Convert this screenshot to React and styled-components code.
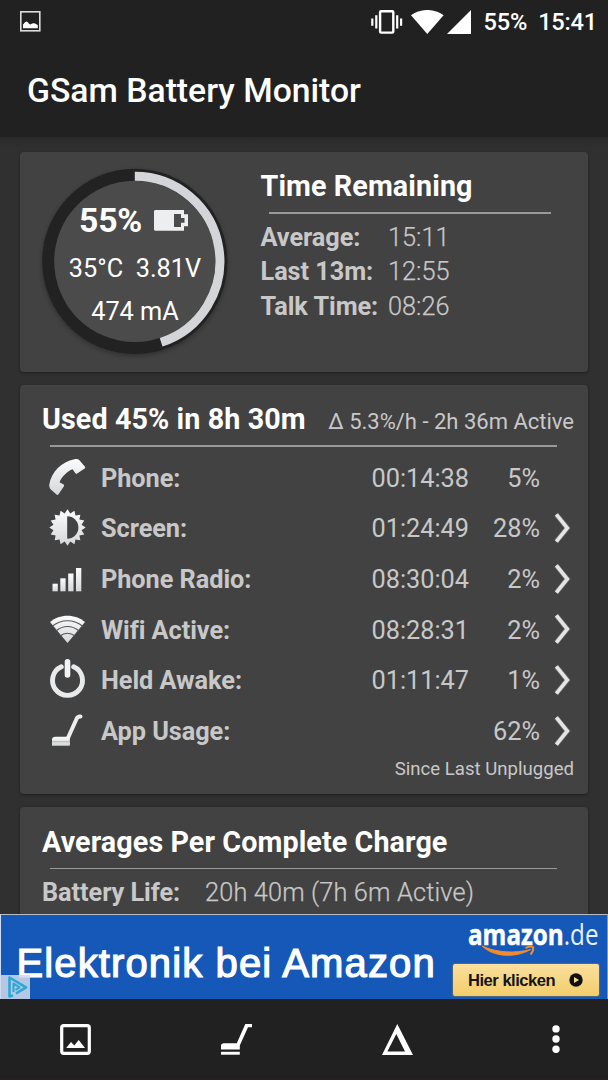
import React from "react";
import styled, { createGlobalStyle } from "styled-components";

const GlobalStyle = createGlobalStyle`
  * { box-sizing: border-box; }
  body { margin: 0; background: #303030; font-family: Roboto, sans-serif; overflow: hidden; }
  svg { display: block; flex: none; }
`;

const Screen = styled.div`
  width: 608px;
  height: 1080px;
  display: flex;
  flex-direction: column;
  background: #303030;
  color: #c8c8c8;
  overflow: hidden;
`;

const Header = styled.header`
  flex: none;
  height: 137px;
  background: #212121;
  color: #fff;
`;

const StatusBar = styled.div`
  height: 42px;
  padding: 1px 11px 0 20px;
  display: flex;
  align-items: center;
  font-size: 23.6px;
  font-weight: 500;
`;

const StatusSpacer = styled.div`
  flex: 1;
`;

const StatusText = styled.span`
  line-height: 43px;
  padding-top: 2px;
  margin-left: ${(p) => p.$gap}px;
  letter-spacing: -0.2px;
  white-space: nowrap;
`;

const AppTitle = styled.h1`
  margin: 0;
  padding-left: 27px;
  font-size: 33.7px;
  line-height: 98px;
  font-weight: 500;
  white-space: nowrap;
`;

const Content = styled.main`
  flex: 1;
  min-height: 0;
  overflow: hidden;
  padding: 15px 20px 0;
  display: flex;
  flex-direction: column;
  gap: 13.5px;
  background: linear-gradient(#292929, #2e2e2e 7px, #303030 14px);
`;

const Card = styled.section`
  flex: none;
  height: ${(p) => p.$height}px;
  border-radius: 4px;
  background: #424242;
  box-shadow: 0 1px 3px rgba(0, 0, 0, 0.4);
`;

const SummaryCard = styled(Card)`
  display: flex;
  padding: 12px 0 0 17px;
`;

const Gauge = styled.div`
  width: 196px;
  height: 196px;
  display: grid;
  > * { grid-area: 1 / 1; }
`;

const GaugeText = styled.div`
  color: #fff;
  display: flex;
  flex-direction: column;
  align-items: center;
  padding-top: 33px;
  z-index: 1;
`;

const Level = styled.div`
  display: flex;
  align-items: center;
  gap: 12px;
  height: 46px;
  margin-right: 3px;
  font-size: 33.8px;
  font-weight: 700;
  letter-spacing: -0.3px;
`;

const Reading = styled.div`
  height: 43px;
  line-height: 43px;
  margin-top: ${(p) => p.$top || 0}px;
  font-size: 25.3px;
  white-space: pre;
`;

const Remaining = styled.div`
  margin-left: 27.5px;
  padding-top: 2px;
`;

const Heading = styled.h2`
  margin: 0;
  color: #fff;
  font-size: 28.7px;
  letter-spacing: 0.1px;
  line-height: 40px;
  font-weight: 700;
  white-space: nowrap;
`;

const Divider = styled.hr`
  border: 0;
  height: 1.5px;
  width: ${(p) => p.$width}px;
  margin: 6px 0 0 8px;
  background: #999;
`;

const Estimates = styled.dl`
  margin: 7.5px 0 0;
  display: grid;
  grid-template-columns: 127.5px auto;
  grid-auto-rows: 34.3px;
  font-size: 25.3px;
  line-height: 34px;
`;

const Term = styled.dt`
  font-weight: 700;
  letter-spacing: -0.06px;
  white-space: nowrap;
`;

const Value = styled.dd`
  margin: 0;
  font-weight: 300;
  letter-spacing: ${(p) => p.$spacing || 0}px;
  -webkit-text-stroke: 0.25px #c8c8c8;
  white-space: nowrap;
`;

const UsageCard = styled(Card)`
  padding: 14px 14px 0 22px;
`;

const UsageHead = styled.div`
  display: flex;
  justify-content: space-between;
  align-items: baseline;
`;

const Rate = styled.span`
  font-size: 22px;
  white-space: nowrap;
`;

const UsageList = styled.ul`
  list-style: none;
  margin: 7px 0 0;
  padding: 0;
`;

const UsageRow = styled.li`
  height: 50.65px;
  display: grid;
  grid-template-columns: 59px 1fr 96.5px 72px 34px;
  align-items: center;
  font-size: 25.3px;
  line-height: 50px;
`;

const IconCell = styled.span`
  padding: 0 0 3px 5px;
`;

const Label = styled.span`
  font-weight: 700;
  letter-spacing: -0.05px;
  white-space: nowrap;
`;

const Figure = styled.span`
  text-align: ${(p) => p.$align || "left"};
`;

const ChevronCell = styled.span`
  justify-self: end;
  padding-bottom: 3px;
`;

const Footnote = styled.div`
  text-align: right;
  font-size: 18.6px;
  line-height: 24px;
  margin-top: -0.5px;
`;

const AveragesCard = styled(Card)`
  padding: 14.5px 14px 0 22px;
`;

const AverageLine = styled.dl`
  margin: 7px 0 0;
  display: grid;
  grid-template-columns: 163px auto;
  font-size: 25.3px;
  line-height: 34px;
`;

const AdBanner = styled.aside`
  flex: none;
  height: 85px;
  display: flex;
  background: #1658b8;
  border-top: 1.5px solid #b4bdc9;
  border-left: 1px solid #cfdcf0;
  border-right: 1px solid #6f9ad6;
  color: #fff;
  position: relative;
`;

const AdSlogan = styled.div`
  width: 452px;
  padding: 24px 0 0 15.5px;
  font-family: "Liberation Sans", sans-serif;
  font-size: 40px;
  line-height: 48px;
  letter-spacing: 1.12px;
  -webkit-text-stroke: 1.2px #fff;
  white-space: nowrap;
`;

const AdSide = styled.div`
  display: flex;
  flex-direction: column;
`;

const AdButton = styled.div`
  width: 146px;
  height: 32px;
  margin-top: 1px;
  padding: 0 16px 0 15px;
  display: flex;
  align-items: center;
  justify-content: space-between;
  border-radius: 2px;
  background: linear-gradient(#fadf9d, #f3cd6c);
  box-shadow: 0 0 1px 1px rgba(120, 120, 90, 0.6);
  color: #151515;
  font: 700 16.6px "Liberation Sans", sans-serif;
  letter-spacing: -0.5px;
  white-space: nowrap;
`;

const AdButtonLabel = styled.span`
  padding-top: 2px;
`;

const AdChoices = styled.div`
  position: absolute;
  left: 0;
  bottom: 0;
  width: 29px;
  height: 24px;
  padding-left: 6px;
  background: rgba(207, 218, 236, 0.86);
`;

const Toolbar = styled.nav`
  flex: none;
  height: 81px;
  background: #212121;
  border-bottom: 1px solid #2a2024;
  display: grid;
  grid-template-columns: 151px 170px 153px 1fr;
  align-items: center;
  justify-items: center;
  > :last-child { margin-left: 30px; }
`;

const StatusPicture = () => (
  <svg width="21" height="21" viewBox="0 0 21 21">
    <rect x="0.8" y="0.8" width="19" height="19" fill="none" stroke="#ddd" strokeWidth="1.6" />
    <path d="M3 17.3V13.5C4 13 4.300 11 6.300 10.400C8 10.600 8.700 12.500 9.800 13.300C11 13.800 12 11.700 14 12.300C15.500 12.500 16.300 13.600 17.800 14V17.300Z" fill="#fff" />
  </svg>
);

const Vibrate = () => (
  <svg width="32" height="24" viewBox="0 0 32 24" fill="none" stroke="#fff">
    <rect x="9.100" y="1.200" width="13.200" height="21.400" rx="1" strokeWidth="2.400" />
    <path d="M5.300 5.200V18.500M26.200 5.200V18.500M1.300 8.500V15.800M30.100 8.500V15.800" strokeWidth="2.200" />
  </svg>
);

const StatusWifi = () => (
  <svg width="33" height="24" viewBox="0 0 33 24">
    <path d="M0 5.300C9.800-1.800 22.800-1.800 32.600 5.300L16.300 24Z" fill="#fff" />
  </svg>
);

const StatusSignal = () => (
  <svg width="24" height="24" viewBox="0 0 24 24">
    <path d="M0 24L24 0V24Z" fill="#fff" />
  </svg>
);

const GaugeRing = () => (
  <svg width="196" height="196" viewBox="0 0 196 196">
    <defs>
      <filter id="ringShadow" x="-10%" y="-10%" width="120%" height="120%">
        <feDropShadow dx="0" dy="2" stdDeviation="2.500" floodColor="#000" floodOpacity="0.3" />
      </filter>
    </defs>
    <circle cx="97.800" cy="97.400" r="92.600" fill="#212121" filter="url(#ringShadow)" />
    <circle cx="97.800" cy="97.400" r="80.600" fill="#4b4b4b" />
    <path d="M97.800 12.300A85.100 85.100 0 0 1 124.100 178.330" fill="none" stroke="#d3d5d9" strokeWidth="9" />
  </svg>
);

const BatteryIcon = () => (
  <svg width="34" height="21" viewBox="0 0 34 21">
    <path fillRule="evenodd" d="M1 0H30V4.300H34V16.300H30V20.700H1L0 19.700V1Z M20 4V17H27V12.800H30.500V8H27V4Z" fill="#eceef0" />
  </svg>
);

const usageGradient = (id) => (
  <defs>
    <linearGradient id={id} x1="0" y1="0" x2="0" y2="1">
      <stop offset="0" stopColor="#fbfcfd" />
      <stop offset="1" stopColor="#d5d7d9" />
    </linearGradient>
  </defs>
);

const UsageIcon = ({ id, children }) => (
  <svg width="41" height="41" viewBox="0 0 41 41">
    {usageGradient(id)}
    {children}
  </svg>
);

const PhoneIcon = () => (
  <UsageIcon id="gPhone">
    <path fill="url(#gPhone)" d="M27.500 2.200C29 1.700 31 1.800 32 2.700L38 9.700C38.400 10.400 38.200 11 37.600 11.500L30.200 16.500C29.300 17 28.700 16.700 28.200 16L25.600 12.200C20.500 14 14.500 20 12.500 25.300L16.300 27.300C17.200 27.800 17.300 28.500 16.800 29.400L11.500 37.200C10.900 38 10.300 38.100 9.500 37.500L3.600 32.200C2.600 31 2.100 29.500 2.300 27.500C4.600 14.500 14.500 4.800 27.500 2.200Z" />
  </UsageIcon>
);

const sunPoints = Array.from({ length: 32 }, (_, i) => {
  const r = i % 2 ? 14.3 : 18.2;
  const a = (i * Math.PI) / 16;
  return `${(20.5 + r * Math.sin(a)).toFixed(2)},${(20.5 - r * Math.cos(a)).toFixed(2)}`;
}).join(" ");

const ScreenIcon = () => (
  <UsageIcon id="gScreen">
    <polygon points={sunPoints} fill="url(#gScreen)" />
    <path d="M20.200 9.300A11.200 11.200 0 0 1 20.200 31.700Z" fill="#424242" />
  </UsageIcon>
);

const RadioIcon = () => (
  <UsageIcon id="gRadio">
    <g fill="url(#gRadio)">
      <rect x="5.500" y="25.700" width="5.300" height="7.600" />
      <rect x="13.300" y="20.300" width="5.300" height="13" />
      <rect x="21.200" y="15.500" width="5.300" height="17.800" />
      <rect x="29" y="10" width="5.300" height="23.300" />
    </g>
  </UsageIcon>
);

const WifiIcon = () => (
  <UsageIcon id="gWifi">
    <path d="M3 13C12.500 4.500 28.500 4.500 38 13L20.500 34Z" fill="url(#gWifi)" />
    <path d="M5 17.500C14 9.800 27 9.800 36 17.500M9 22C16 16 25 16 32 22M13 27C17.500 23.300 23.500 23.300 28 27" fill="none" stroke="#585858" strokeWidth="1.100" />
  </UsageIcon>
);

const PowerIcon = () => (
  <UsageIcon id="gPower">
    <path d="M14.300 7.700A15 15 0 1 0 26.700 7.700" fill="none" stroke="#e8eaeb" strokeWidth="4.900" strokeLinecap="round" />
    <path d="M20.500 2.800V16" stroke="#f2f3f4" strokeWidth="5.600" strokeLinecap="round" />
  </UsageIcon>
);

const VacuumIcon = () => (
  <UsageIcon id="gVac">
    <path d="M20.500 29L29.500 9Q30.700 6.300 33.500 6.600" fill="none" stroke="#eceded" strokeWidth="4" strokeLinecap="round" />
    <path d="M5 34.200V29.500Q5 26.700 8.500 26.700H22.800V34.200Z" fill="url(#gVac)" />
    <path d="M5 31.900H22.800" stroke="#aaa" strokeWidth="1" />
    <rect x="5" y="32.400" width="17.800" height="3.300" fill="#dcdddd" />
  </UsageIcon>
);

const Chevron = () => (
  <svg width="20" height="34" viewBox="0 0 20 34" fill="none">
    <path d="M2.300 3.500L13.300 17L2.300 30.500" stroke="#e4e4e4" strokeOpacity="0.3" strokeWidth="5" />
    <path d="M2.300 3.300L13.300 17L2.300 30.700" stroke="#e4e4e4" strokeWidth="3.600" />
  </svg>
);

const LogoDrawing = styled.svg`
  overflow: visible;
  font-family: "Open Sans", sans-serif;
  font-size: 29px;
`;

const AmazonLogo = () => (
  <LogoDrawing width="147" height="48" viewBox="0 0 147 48">
    <text x="15" y="29.500" fill="#fff" textLength="130.500" lengthAdjust="spacingAndGlyphs">
      <tspan fontWeight="700" stroke="#fff" strokeWidth="0.500">amazon</tspan>
      <tspan fill="#e7f0ff">.de</tspan>
    </text>
    <path d="M29 31C41 42.500 63 43 77.500 34.500C63 38.500 44 38 29 31Z" fill="#f08c2b" stroke="#f08c2b" strokeWidth="1" />
    <path d="M72.500 33C76 31.300 79 31.300 80.300 32.200C80.300 35 79 38 77.500 39.500" fill="none" stroke="#f08c2b" strokeWidth="2" />
  </LogoDrawing>
);

const PlayDot = () => (
  <svg width="14" height="14" viewBox="0 0 14 14">
    <circle cx="7" cy="7" r="6.700" fill="#111" />
    <path d="M5 4L10 7L5 10Z" fill="#f6d98f" />
  </svg>
);

const AdChoicesIcon = () => (
  <svg width="21" height="24" viewBox="0 0 21 24" fill="none" stroke="#2aa9d4" strokeLinejoin="round">
    <path d="M6 20.500L2.500 21.500V2.500L19 12.300L9 18.500" strokeWidth="2.600" />
    <path d="M6.500 17V8.500L12.500 12.300L8.500 15" strokeWidth="2" />
  </svg>
);

const GalleryIcon = () => (
  <svg width="31" height="31" viewBox="0 0 31 31">
    <rect x="1.700" y="1.700" width="27.600" height="27.600" rx="2" fill="none" stroke="#fff" strokeWidth="3.200" />
    <path d="M6.200 24L11 18L14.300 21.500L18.700 16L25 24Z" fill="#fff" />
  </svg>
);

const VacuumTool = () => (
  <svg width="31" height="31" viewBox="0 0 31 31" fill="#fff">
    <path d="M0 25.500V22Q0 19.300 3 19.300H15.800L24.300 0H31V3.300H27L18.800 21.500V25.500Z" />
    <rect x="0" y="27.800" width="18.800" height="2.900" />
  </svg>
);

const DeltaIcon = () => (
  <svg width="31" height="31" viewBox="0 0 31 31">
    <path fillRule="evenodd" d="M15.300 0L31 31H0ZM14.300 10L5.400 27.500H23Z" fill="#fff" />
  </svg>
);

const MoreIcon = () => (
  <svg width="8" height="30" viewBox="0 0 8 30" fill="#fff">
    <circle cx="4" cy="4.900" r="3.700" />
    <circle cx="4" cy="15" r="3.700" />
    <circle cx="4" cy="25.200" r="3.700" />
  </svg>
);

const usage = [
  { label: "Phone:", time: "00:14:38", share: "5%", Icon: PhoneIcon },
  { label: "Screen:", time: "01:24:49", share: "28%", Icon: ScreenIcon, more: true },
  { label: "Phone Radio:", time: "08:30:04", share: "2%", Icon: RadioIcon, more: true },
  { label: "Wifi Active:", time: "08:28:31", share: "2%", Icon: WifiIcon, more: true },
  { label: "Held Awake:", time: "01:11:47", share: "1%", Icon: PowerIcon, more: true },
  { label: "App Usage:", time: "", share: "62%", Icon: VacuumIcon, more: true },
];

const estimates = [
  ["Average:", "15:11"],
  ["Last 13m:", "12:55"],
  ["Talk Time:", "08:26"],
];

const StatusIcons = styled.div`
  display: flex;
  gap: ${(p) => p.$gap}px;
`;

export default function App() {
  return (
    <Screen>
      <GlobalStyle />
      <Header>
        <StatusBar>
          <StatusPicture />
          <StatusSpacer />
          <StatusIcons $gap={7.5}>
            <Vibrate />
            <StatusIcons $gap={3}>
              <StatusWifi />
              <StatusSignal />
            </StatusIcons>
          </StatusIcons>
          <StatusText $gap={13}>55%</StatusText>
          <StatusText $gap={11}>15:41</StatusText>
        </StatusBar>
        <AppTitle>GSam Battery Monitor</AppTitle>
      </Header>

      <Content>
        <SummaryCard $height={219.5}>
          <Gauge>
            <GaugeRing />
            <GaugeText>
              <Level>
                <span>55%</span>
                <BatteryIcon />
              </Level>
              <Reading $top={4}>{"35°C  3.81V"}</Reading>
              <Reading>474 mA</Reading>
            </GaugeText>
          </Gauge>
          <Remaining>
            <Heading>Time Remaining</Heading>
            <Divider $width={282} />
            <Estimates>
              {estimates.map(([term, value]) => (
                <React.Fragment key={term}>
                  <Term>{term}</Term>
                  <Value>{value}</Value>
                </React.Fragment>
              ))}
            </Estimates>
          </Remaining>
        </SummaryCard>

        <UsageCard $height={408.5}>
          <UsageHead>
            <Heading>Used 45% in 8h 30m</Heading>
            <Rate>Δ 5.3%/h - 2h 36m Active</Rate>
          </UsageHead>
          <Divider $width={507} />
          <UsageList>
            {usage.map(({ label, time, share, Icon, more }) => (
              <UsageRow key={label}>
                <IconCell><Icon /></IconCell>
                <Label>{label}</Label>
                <Figure>{time}</Figure>
                <Figure $align="right">{share}</Figure>
                <ChevronCell>{more && <Chevron />}</ChevronCell>
              </UsageRow>
            ))}
          </UsageList>
          <Footnote>Since Last Unplugged</Footnote>
        </UsageCard>

        <AveragesCard $height={219}>
          <Heading>Averages Per Complete Charge</Heading>
          <Divider $width={507} />
          <AverageLine>
            <Term>Battery Life:</Term>
            <Value $spacing={0.16}>20h 40m (7h 6m Active)</Value>
          </AverageLine>
        </AveragesCard>
      </Content>

      <AdBanner>
        <AdSlogan>Elektronik bei Amazon</AdSlogan>
        <AdSide>
          <AmazonLogo />
          <AdButton>
            <AdButtonLabel>Hier klicken</AdButtonLabel>
            <PlayDot />
          </AdButton>
        </AdSide>
        <AdChoices><AdChoicesIcon /></AdChoices>
      </AdBanner>

      <Toolbar>
        <GalleryIcon />
        <VacuumTool />
        <DeltaIcon />
        <MoreIcon />
      </Toolbar>
    </Screen>
  );
}
